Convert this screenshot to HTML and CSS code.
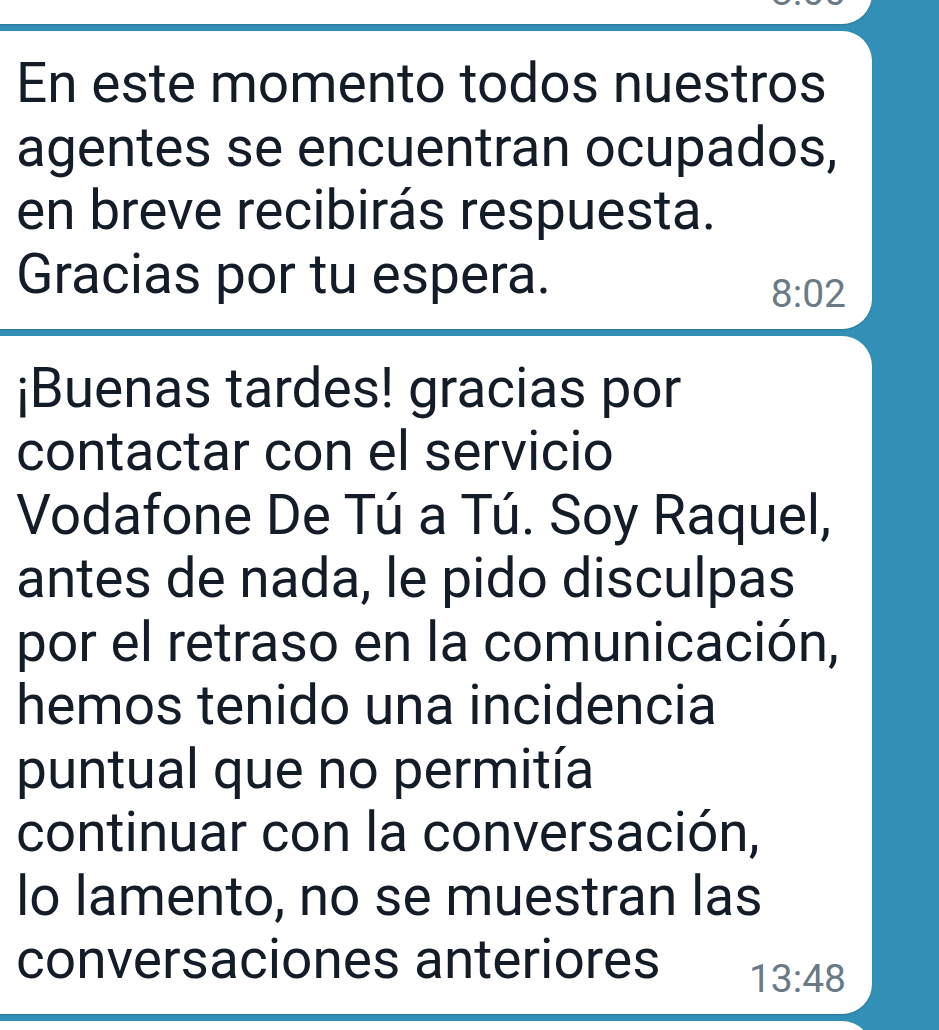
FILE: index.html
```html
<!DOCTYPE html>
<html lang="es">
<head>
<meta charset="utf-8">
<link rel="stylesheet" href="styles.css">
</head>
<body>
<div class="chat">
  <div class="bubble bubble-top">
    <div class="last"><span class="txt"></span><span class="time">8:00</span></div>
  </div>
  <div class="bubble">
    <div class="line">En este momento todos nuestros</div>
    <div class="line">agentes se encuentran ocupados,</div>
    <div class="line">en breve recibirás respuesta.</div>
    <div class="last"><span class="txt">Gracias por tu espera.</span><span class="time">8:02</span></div>
  </div>
  <div class="bubble">
    <div class="line">¡Buenas tardes! gracias por</div>
    <div class="line">contactar con el servicio</div>
    <div class="line">Vodafone De Tú a Tú. Soy Raquel,</div>
    <div class="line">antes de nada, le pido disculpas</div>
    <div class="line">por el retraso en la comunicación,</div>
    <div class="line">hemos tenido una incidencia</div>
    <div class="line">puntual que no permitía</div>
    <div class="line">continuar con la conversación,</div>
    <div class="line">lo lamento, no se muestran las</div>
    <div class="last"><span class="txt">conversaciones anteriores</span><span class="time">13:48</span></div>
  </div>
  <div class="bubble bubble-bottom"></div>
</div>
</body>
</html>
```
FILE: styles.css
```css
html, body {
  margin: 0;
  padding: 0;
  background: #3290b6;
  overflow: hidden;
  width: 939px;
  height: 1030px;
}
.chat {
  display: flex;
  flex-direction: column;
  gap: 7px;
  margin-top: -36px;
  margin-left: -30px;
  width: 902px;
  font-family: Roboto, "Noto Sans", sans-serif;
}
.bubble {
  background: #ffffff;
  border-radius: 30px;
  padding: 21px 26px 15px 46px;
  box-shadow: 0 1px 2px rgba(0, 0, 0, 0.18);
  color: #141d27;
  font-size: 55px;
  line-height: 63.5px;
}
.line {
  white-space: nowrap;
}
.last {
  display: flex;
  justify-content: space-between;
  align-items: flex-start;
  white-space: nowrap;
}
.time {
  margin-top: 31px;
  font-size: 39px;
  line-height: 40px;
  color: #6a7a87;
}
.bubble-top {
  padding-top: 8px;
  padding-bottom: 12px;
}
.bubble-top .last {
  height: 40px;
}
.bubble-top .time {
  margin-top: 0;
}
.bubble-bottom {
  height: 80px;
  padding: 0;
}
```
